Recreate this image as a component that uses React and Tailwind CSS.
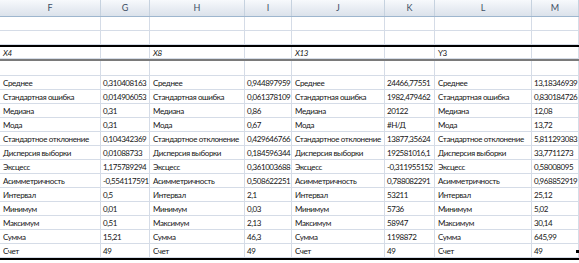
import React from 'react';

const cols = ['F', 'G', 'H', 'I', 'J', 'K', 'L', 'M'];

const labels = [
  'Среднее',
  'Стандартная ошибка',
  'Медиана',
  'Мода',
  'Стандартное отклонение',
  'Дисперсия выборки',
  'Эксцесс',
  'Асимметричность',
  'Интервал',
  'Минимум',
  'Максимум',
  'Сумма',
  'Счет',
];

const groups = [
  {
    name: 'X4',
    values: ['0,310408163', '0,014906053', '0,31', '0,31', '0,104342369', '0,01088733', '1,175789294', '-0,554117591', '0,5', '0,01', '0,51', '15,21', '49'],
  },
  {
    name: 'X8',
    values: ['0,944897959', '0,061378109', '0,86', '0,67', '0,429646766', '0,184596344', '0,361003688', '0,508622251', '2,1', '0,03', '2,13', '46,3', '49'],
  },
  {
    name: 'X13',
    values: ['24466,77551', '1982,479462', '20122', '#Н/Д', '13877,35624', '192581016,1', '-0,311955152', '0,788082291', '53211', '5736', '58947', '1198872', '49'],
  },
  {
    name: 'Y3',
    values: ['13,18346939', '0,830184726', '12,08', '13,72', '5,811293083', '33,7711273', '0,58008095', '0,968852919', '25,12', '5,02', '30,14', '645,99', '49'],
  },
];

const grid = 'grid grid-cols-[101px_49px_95px_47px_93px_50px_97px_47px]';

const Cell = ({ children, italic, num }) => (
  <div
    className={`flex items-center overflow-hidden whitespace-nowrap border-r border-b border-[#d5dce7] leading-none ${
      num ? 'pl-[2px] tracking-[-0.45px]' : 'pl-[3px] tracking-[-0.38px]'
    } ${italic ? 'italic' : ''}`}
  >
    {children}
  </div>
);

const Row = ({ cells, h = 'h-[14px]', italic = [] }) => (
  <div className={`${grid} ${h}`}>
    {cols.map((c, i) => (
      <Cell key={c} italic={italic[i]} num={i % 2 === 1}>
        {cells ? cells[i] : ''}
      </Cell>
    ))}
  </div>
);

export default function App() {
  return (
    <div className="w-[579px] h-[263px] overflow-hidden bg-white font-['Lato','Noto_Sans',sans-serif] text-[8px] text-[#161616]">
      <div className={`${grid} h-[17px] bg-gradient-to-b from-[#f7f9fc] to-[#dbe2eb] border-b border-[#9eb6ce]`}>
        {cols.map((c) => (
          <div key={c} className="flex items-center justify-center border-r border-[#c6d2df] text-[9px] text-[#3e4e64]">
            {c}
          </div>
        ))}
      </div>
      <Row h="h-[14px]" />
      <Row h="h-[14px]" />
      <div className="h-[2px] bg-black" />
      <Row
        h="h-[12px]"
        cells={['X4', '', 'X8', '', 'X13', '', 'Y3', '']}
        italic={[true, false, true, false, true, false, false, false]}
      />
      <div className="h-[2px] bg-[#7a7a7a]" />
      <Row h="h-[15px]" />
      {labels.map((label, r) => (
        <Row key={label} cells={groups.flatMap((g) => [label, g.values[r]])} />
      ))}
      <div className="relative h-[2px] bg-black">
        <div className="absolute right-0 -top-[8px] h-[3px] w-[3px] bg-black" />
      </div>
    </div>
  );
}
